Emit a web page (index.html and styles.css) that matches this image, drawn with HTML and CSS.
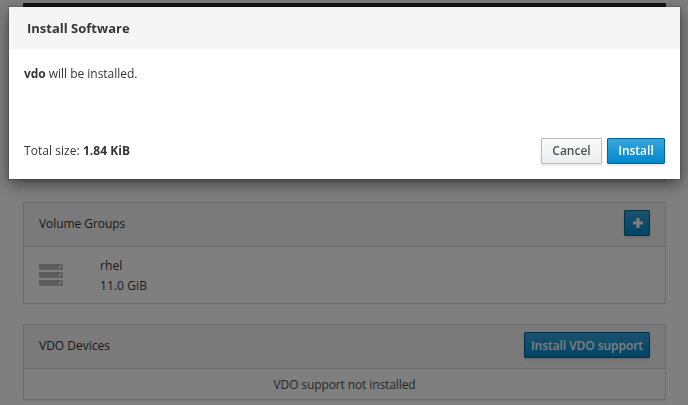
FILE: index.html
```html
<!DOCTYPE html>
<html lang="en">
<head>
<meta charset="utf-8">
<title>Storage</title>
<link rel="stylesheet" href="styles.css">
</head>
<body>
<main class="page">
  <section class="graph-panel"></section>
  <section class="panel">
    <header class="panel-heading">
      <span class="group-title">Volume Groups</span>
      <button class="btn btn-primary btn-add" aria-label="Add"><svg width="10" height="10" viewBox="0 0 10 10"><path fill="currentColor" d="M3.5 0h3v3.5H10v3H6.5V10h-3V6.5H0v-3h3.5z"/></svg></button>
    </header>
    <div class="group-row">
      <svg class="server-icon" width="24" height="22" viewBox="0 0 24 22"><g fill="#bbb"><rect width="24" height="6" rx="1"/><rect y="8" width="24" height="6" rx="1"/><rect y="16" width="24" height="6" rx="1"/></g><path fill="#fff" d="M20 2h2v2h-2zM20 10h2v2h-2zM20 18h2v2h-2z"/></svg>
      <div class="group-info"><div>rhel</div><div>11.0 GiB</div></div>
    </div>
  </section>
  <section class="panel">
    <header class="panel-heading">
      <span>VDO Devices</span>
      <button class="btn btn-primary btn-vdo">Install VDO support</button>
    </header>
    <div class="empty-row">VDO support not installed</div>
  </section>
</main>
<div class="backdrop">
  <div class="modal" role="dialog">
    <header class="modal-header">Install Software</header>
    <div class="modal-body"><strong>vdo</strong> will be installed.</div>
    <footer class="modal-footer">
      <span class="size">Total size: <strong>1.84 KiB</strong></span>
      <button class="btn btn-default">Cancel</button>
      <button class="btn btn-primary btn-install">Install</button>
    </footer>
  </div>
</div>
</body>
</html>
```
FILE: styles.css
```css
* { box-sizing: border-box; }

body {
  margin: 0;
  height: 405px;
  overflow: hidden;
  background: #fff;
  color: #363636;
  font: 12px/20px "Open Sans", sans-serif;
}

strong { font-weight: 700; }

.page { padding: 3px 22px 0 23px; }

.graph-panel {
  height: 179px;
  margin-bottom: 20px;
  border: 1px solid #d6d6d6;
  border-top: 30px solid #292929;
}

.panel {
  margin-bottom: 20px;
  border: 1px solid #d6d6d6;
  border-radius: 1px;
  box-shadow: 0 1px 1px rgba(0, 0, 0, .05);
}

.panel-heading {
  display: flex;
  align-items: flex-start;
  justify-content: space-between;
  height: 44px;
  padding: 7px 15px 0;
  background: #f5f5f5;
  border-bottom: 1px solid #d6d6d6;
  line-height: 27px;
}

.group-title { letter-spacing: -.06px; }

.group-row {
  display: flex;
  align-items: center;
  height: 56px;
  padding-left: 15px;
}

.server-icon { margin-right: 37px; }

.group-info {
  padding-top: 2px;
  letter-spacing: .08px;
}

.empty-row {
  height: 30px;
  color: #4d4d4d;
  line-height: 32px;
  letter-spacing: -.11px;
  text-align: center;
}

.btn {
  height: 26px;
  padding: 0;
  border: 1px solid #bbb;
  border-radius: 1px;
  font: 600 12px/22px "Open Sans", sans-serif;
  box-shadow: 0 2px 3px rgba(3, 3, 3, .1);
}

.btn-default {
  width: 61px;
  margin-right: 5px;
  color: #4d5258;
  background: linear-gradient(#fafafa, #ededed);
}

.btn-primary {
  color: #fff;
  border-color: #00659c;
  background: linear-gradient(#39a5dc, #0088ce);
}

.btn-install { width: 58px; }

.btn-vdo {
  width: 126px;
  padding-top: 1px;
  letter-spacing: -.06px;
}

.btn-add {
  display: flex;
  align-items: center;
  justify-content: center;
  width: 26px;
  padding: 0 0 0 2px;
}

.backdrop {
  position: fixed;
  inset: 0;
  padding: 7px 8px 0 9px;
  background: rgba(0, 0, 0, .5);
}

.modal {
  height: 172px;
  background: #fff;
  box-shadow: 0 5px 15px rgba(0, 0, 0, .5), 0 0 1px 1px rgba(0, 0, 0, .15);
}

.modal-header {
  height: 42px;
  padding-left: 18px;
  background: #f5f5f5;
  font-size: 13px;
  font-weight: 700;
  line-height: 42px;
}

.modal-body {
  height: 89px;
  padding: 15px 15px 0;
  letter-spacing: -.03px;
}

.modal-footer {
  display: flex;
  align-items: center;
  height: 26px;
  padding: 0 15px;
}

.size {
  margin-right: auto;
  letter-spacing: .05px;
}
```
